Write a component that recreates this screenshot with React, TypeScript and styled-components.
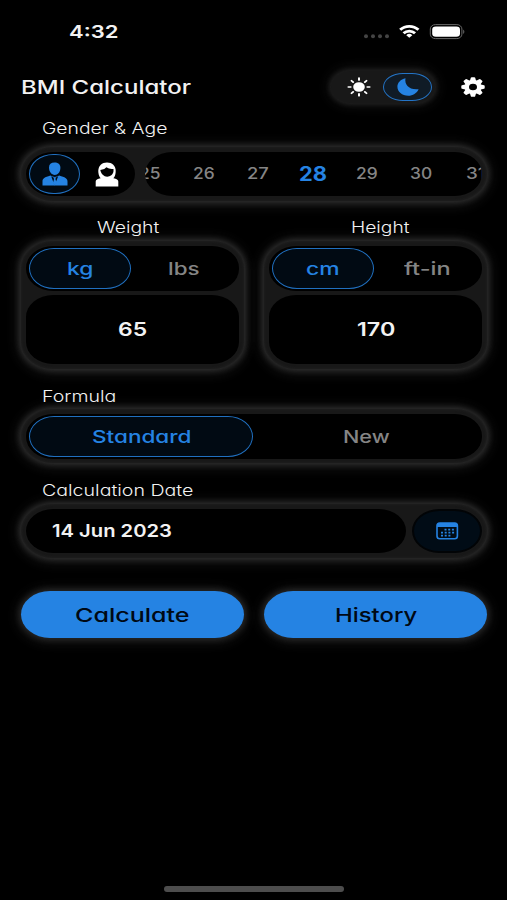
import React, { useLayoutEffect, useRef, useState } from 'react';
import styled, { createGlobalStyle, css } from 'styled-components';

const BLUE = '#2583e3';
const PANEL = '#181818';

const GlobalStyle = createGlobalStyle`
  html, body { margin: 0; background: #000; }
  *, *::before, *::after { box-sizing: border-box; }
  button { border: 0; padding: 0; margin: 0; background: none; font: inherit; color: inherit; }
`;

const Screen = styled.div`
  width: 507px;
  height: 900px;
  display: flex;
  flex-direction: column;
  padding: 0 20px 0 21px;
  background: #000;
  color: #f2f2f2;
  font-family: Inter, 'Noto Sans', sans-serif;
  font-feature-settings: 'cv11' 1;
  overflow: hidden;
`;

const TextBox = styled.span<{ $w: number; $size: number; $weight: number; $color?: string }>`
  display: block;
  flex: none;
  width: ${(p) => p.$w}px;
  font-size: ${(p) => p.$size}px;
  font-weight: ${(p) => p.$weight};
  line-height: 24px;
  text-align: left;
  color: ${(p) => p.$color || 'inherit'};
`;

const TextRun = styled.span`
  display: inline-block;
  white-space: nowrap;
  transform-origin: 0 50%;
  vertical-align: top;
`;

type WideTextProps = { w: number; size: number; weight?: number; color?: string; children: string };

/* Extended-width text: the run is widened to fill its box. */
function WideText({ w, size, weight = 500, color, children }: WideTextProps) {
  const ref = useRef<HTMLSpanElement>(null);
  const [scale, setScale] = useState(1);
  useLayoutEffect(() => {
    if (ref.current) setScale(w / ref.current.offsetWidth);
  }, [w, children]);
  return (
    <TextBox $w={w} $size={size} $weight={weight} $color={color}>
      <TextRun ref={ref} style={{ transform: `scaleX(${scale})` }}>{children}</TextRun>
    </TextBox>
  );
}

const StatusBar = styled.div`
  height: 63px;
  display: flex;
  align-items: center;
  justify-content: space-between;
  padding: 1px 22px 0 48px;
`;

const StatusIcons = styled.svg`
  display: block;
  width: 104px;
  height: 20px;
`;

const Header = styled.header`
  height: 47px;
  display: flex;
  align-items: center;
  padding-right: 2px;
`;

const Spacer = styled.div`
  flex: 1;
`;

const glow = css`
  box-shadow: 0 0 6px 1px #333, 0 1px 12px 4px #191919, inset 0 0 3px #242424;
`;

const ThemeToggle = styled.div`
  width: 104px;
  height: 32px;
  margin-right: 26px;
  padding: 2px 3px;
  display: flex;
  border-radius: 20px / 16px;
  background: ${PANEL};
  box-shadow: 0 0 5px 1px #242424, 0 0 12px 3px #161616;
`;

const ThemeOption = styled.button<{ $active?: boolean }>`
  width: 49px;
  display: flex;
  align-items: center;
  justify-content: center;
  border: ${(p) => (p.$active ? `1.5px solid #2474c6` : '0')};
  border-radius: 20px / 14px;
  background: ${(p) => (p.$active ? '#101b26' : 'transparent')};
`;

const Icon = styled.svg`
  display: block;
  flex: none;
`;

const LabelRow = styled.div<{ $height: number; $top: number; $centered?: boolean }>`
  height: ${(p) => p.$height}px;
  padding-top: ${(p) => p.$top - 12}px;
  display: grid;
  grid-template-columns: ${(p) => (p.$centered ? '1fr 1fr' : '1fr')};
  column-gap: 40px;
  justify-items: ${(p) => (p.$centered ? 'center' : 'start')};
  padding-left: ${(p) => (p.$centered ? 0 : 21)}px;
`;

const Panel = styled.section<{ $tall?: boolean }>`
  display: flex;
  flex-direction: ${(p) => (p.$tall ? 'column' : 'row')};
  gap: ${(p) => (p.$tall ? 4 : 0)}px;
  height: ${(p) => (p.$tall ? 128 : 54)}px;
  padding: 5px;
  border-radius: 32px / 27px;
  background: ${PANEL};
  ${glow}
`;

const Pair = styled.div`
  display: grid;
  grid-template-columns: 1fr 1fr;
  column-gap: 20px;
`;

const Segments = styled.div<{ $width?: number; $short?: boolean }>`
  display: flex;
  flex: none;
  width: ${(p) => (p.$width ? `${p.$width}px` : '100%')};
  height: ${(p) => (p.$short ? 44 : 45)}px;
  padding: 2px 2px 2px 3px;
  border-radius: 27px / 22px;
  background: #000;
`;

const Segment = styled.button<{ $active?: boolean; $width?: number }>`
  flex: ${(p) => (p.$width ? 'none' : '1 1 0')};
  width: ${(p) => (p.$width ? `${p.$width}px` : 'auto')};
  display: flex;
  align-items: center;
  justify-content: center;
  border: ${(p) => (p.$active ? '1.5px solid #2070c0' : '0')};
  border-radius: 25px / 20.5px;
  background: ${(p) => (p.$active ? '#010a13' : 'transparent')};
  color: ${(p) => (p.$active ? BLUE : '#858585')};
`;

const AgeStrip = styled.div`
  width: 337px;
  margin-left: 10px;
  padding-right: 2px;
  height: 44px;
  display: flex;
  align-items: center;
  justify-content: center;
  border-radius: 27px / 22px;
  background: #000;
  overflow: hidden;
`;

const AgeItem = styled.div`
  flex: none;
  width: 54.2px;
  display: flex;
  justify-content: center;
`;

const ValueField = styled.div`
  flex: 1;
  display: flex;
  align-items: center;
  justify-content: center;
  border-radius: 27px / 22px;
  background: #000;
`;

const DateField = styled.div`
  width: 380px;
  display: flex;
  align-items: center;
  padding-left: 26px;
  border-radius: 27px / 22px;
  background: #000;
`;

const DateButton = styled.button`
  width: 70px;
  margin-left: 6px;
  display: flex;
  align-items: center;
  justify-content: center;
  border: 2px solid #020406;
  border-radius: 27px / 22px;
  background: #010c16;
`;

const Actions = styled(Pair)`
  margin-top: 33px;
`;

const ActionButton = styled.button`
  height: 47px;
  display: flex;
  align-items: center;
  justify-content: center;
  border-radius: 29px / 23.5px;
  background: ${BLUE};
  color: #000914;
  box-shadow: 0 0 6px 1px #2c2c2c, 0 1px 12px 4px #171717;
`;

const HomeIndicator = styled.div`
  width: 180px;
  height: 6px;
  margin: auto auto 8px 143px;
  border-radius: 3px;
  background: #4d4d4d;
`;

function StatusGlyphs() {
  return (
    <StatusIcons viewBox="0 0 104 20">
      {[5, 12, 19, 26].map((x) => <circle key={x} cx={x} cy="14.2" r="2" fill="#444" />)}
      <g transform="translate(48.3 15.8) scale(1.17 1.1)" fill="none" stroke="#fff" strokeWidth="2.5">
        <path d="M-7.8-7.3A11.2 11.2 0 0 1 7.8-7.3" />
        <path d="M-4.9-4.1A7 7 0 0 1 4.9-4.1" />
        <path d="M0 0L-2.6-2.4A3.7 3.7 0 0 1 2.6-2.4Z" fill="#fff" stroke="none" />
      </g>
      <rect x="69.3" y="2.6" width="31.6" height="14" rx="5" ry="4.4" fill="none" stroke="#686868" />
      <rect x="71.2" y="4.4" width="27.8" height="10.4" rx="3.6" ry="3" fill="#fff" />
      <path d="M102.3 7.5Q104.3 9.7 102.3 12Z" fill="#777" />
    </StatusIcons>
  );
}

const rays = [0, 45, 90, 135, 180, 225, 270, 315];

function SunIcon() {
  return (
    <Icon width="24" height="20" viewBox="-12 -12 24 24" preserveAspectRatio="none">
      <circle r="5.8" fill="#fff" />
      {rays.map((a) => (
        <path key={a} d="M0-8.3V-10.6" transform={`rotate(${a})`} stroke="#fff" strokeWidth="2" strokeLinecap="round" />
      ))}
    </Icon>
  );
}

function MoonIcon() {
  return (
    <Icon width="22" height="18" viewBox="0 0 22 18">
      <path d="M8.5.3C7.2 6.6 12.3 12.4 21.6 11.2C19.8 15.3 15.8 17.7 11.3 17.7C5 17.7.4 13.8.4 8.8C.4 4.8 3.6 1.4 8.5.3Z" fill={BLUE} />
    </Icon>
  );
}

function GearIcon() {
  return (
    <Icon width="24" height="20" viewBox="-12 -12 24 24" preserveAspectRatio="none">
      {rays.map((a) => (
        <path key={a} d="M-3.2-7L-2.2-11Q-2-11.7-1.3-11.7H1.3Q2-11.7 2.2-11L3.2-7Z" transform={`rotate(${a})`} fill="#fff" />
      ))}
      <circle r="6.2" fill="none" stroke="#fff" strokeWidth="4.4" />
    </Icon>
  );
}

function ManIcon() {
  return (
    <Icon width="26" height="24" viewBox="0 0 26 24">
      <path d="M7 5.6C7 2.2 9 .5 12.5.5S18.4 2.2 18.4 5.8C18.4 10 15.8 13 12.7 13S7 9.8 7 5.6Z" fill={BLUE} />
      <path d="M.5 23.5V19.5C.5 16.5 2.6 15.4 8.4 13.6Q12.8 16.5 17.2 13.6C23 15.4 25.5 16.5 25.5 19.5V23.5Z" fill={BLUE} />
      <path d="M9.2 14.2L12.5 23.3L16.2 14.2L14 15.6H11.3Z" fill="#010a13" />
      <path d="M11.5 15.3H13.9L13.5 17.2L14.6 21L12.7 23.4L10.9 21L12 17.2Z" fill={BLUE} />
    </Icon>
  );
}

function WomanIcon() {
  return (
    <Icon width="24" height="25" viewBox="0 0 24 25">
      <path d="M.7 24.5V19.5Q.7 17.4 4.5 16.4L7 15.7Q12 18.2 17 15.7L19.6 16.4Q23.3 17.4 23.3 19.5V24.5Z" fill="#fff" />
      <path d="M12 .5C6.8.5 3.5 3.8 3.3 8.7C3.2 13.8 5.5 17.2 8.3 17.2H15.7C18.6 17.2 20.8 13.8 20.7 8.7C20.5 3.8 17.2.5 12 .5Z" fill="#fff" />
      <path d="M5.3 8.1Q9.6 7.9 11.4 5.3Q14.5 7.5 18.5 6.9V9.3C18 12.6 15.3 14.7 12.2 14.7C8.8 14.7 6.2 12.2 5.3 8.1Z" fill="#000" />
    </Icon>
  );
}

function CalendarIcon() {
  return (
    <Icon width="23" height="18" viewBox="0 0 23 18">
      <rect x="1" y="1" width="20.4" height="15.8" rx="2.8" fill="none" stroke={BLUE} strokeWidth="1.6" />
      <path d="M1 5V3Q1 1 3.5 1H19Q21.4 1 21.4 3V5Z" fill={BLUE} />
      <path d="M8.5 7.7H18.5M5 10.7H18.5M5 13.6H15" stroke={BLUE} strokeWidth="1.8" strokeDasharray="2 1.7" />
    </Icon>
  );
}

const ages = [25, 26, 27, 28, 29, 30, 31];

function UnitPanel({ units, widths, value, valueWidth }: {
  units: string[]; widths: number[]; value: string; valueWidth: number;
}) {
  return (
    <Panel $tall>
      <Segments>
        <Segment $active $width={102}><WideText w={widths[0]} size={17.5}>{units[0]}</WideText></Segment>
        <Segment><WideText w={widths[1]} size={17.5}>{units[1]}</WideText></Segment>
      </Segments>
      <ValueField><WideText w={valueWidth} size={19} weight={600}>{value}</WideText></ValueField>
    </Panel>
  );
}

export default function App() {
  return (
    <>
      <GlobalStyle />
      <Screen>
        <StatusBar>
          <WideText w={49} size={17.5} weight={600}>4:32</WideText>
          <StatusGlyphs />
        </StatusBar>
        <Header>
          <WideText w={170} size={18.5} weight={500}>BMI Calculator</WideText>
          <Spacer />
          <ThemeToggle>
            <ThemeOption><SunIcon /></ThemeOption>
            <ThemeOption $active><MoonIcon /></ThemeOption>
          </ThemeToggle>
          <GearIcon />
        </Header>

        <LabelRow $height={37} $top={18.5}>
          <WideText w={125} size={15.3} weight={300}>Gender &amp; Age</WideText>
        </LabelRow>
        <Panel>
          <Segments $width={109} $short>
            <Segment $active $width={51}><ManIcon /></Segment>
            <Segment><WomanIcon /></Segment>
          </Segments>
          <AgeStrip>
            {ages.map((age) => (
              <AgeItem key={age}>
                {age === 28
                  ? <WideText w={28} size={19.5} weight={700} color={BLUE}>28</WideText>
                  : <WideText w={age === 31 ? 19 : 22} size={15.8} weight={500} color="#858585">{String(age)}</WideText>}
              </AgeItem>
            ))}
          </AgeStrip>
        </Panel>

        <LabelRow $height={40} $top={26.5} $centered>
          <WideText w={62} size={15.3} weight={300}>Weight</WideText>
          <WideText w={59} size={15.3} weight={300}>Height</WideText>
        </LabelRow>
        <Pair>
          <UnitPanel units={['kg', 'lbs']} widths={[26, 32]} value="65" valueWidth={29} />
          <UnitPanel units={['cm', 'ft-in']} widths={[34, 47]} value="170" valueWidth={38} />
        </Pair>

        <LabelRow $height={40} $top={27.5}>
          <WideText w={74} size={15.3} weight={300}>Formula</WideText>
        </LabelRow>
        <Panel>
          <Segments $width={456}>
            <Segment $active $width={224}><WideText w={99} size={17.5}>Standard</WideText></Segment>
            <Segment><WideText w={47} size={17.5}>New</WideText></Segment>
          </Segments>
        </Panel>

        <LabelRow $height={41} $top={27.5}>
          <WideText w={151} size={15.3} weight={300}>Calculation Date</WideText>
        </LabelRow>
        <Panel>
          <DateField><WideText w={120} size={17.5} weight={600}>14 Jun 2023</WideText></DateField>
          <DateButton><CalendarIcon /></DateButton>
        </Panel>

        <Actions>
          <ActionButton><WideText w={115} size={19.2}>Calculate</WideText></ActionButton>
          <ActionButton><WideText w={82} size={19.2}>History</WideText></ActionButton>
        </Actions>
        <HomeIndicator />
      </Screen>
    </>
  );
}
